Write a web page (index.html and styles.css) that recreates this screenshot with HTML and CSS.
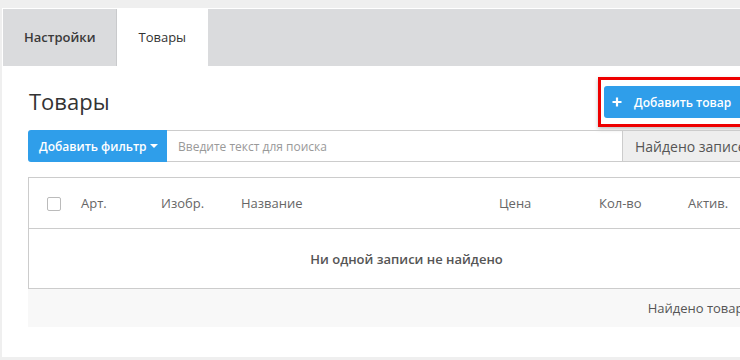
FILE: index.html
```html
<!DOCTYPE html>
<html lang="ru">
<head>
<meta charset="utf-8">
<title>Товары</title>
<link rel="stylesheet" href="styles.css">
</head>
<body>
<div class="panel">
  <div class="tabs">
    <div class="tab">Настройки</div>
    <div class="tab active">Товары</div>
  </div>
  <div class="content">
    <div class="head">
      <h1 class="title">Товары</h1>
      <div class="highlight">
        <button class="btn add-btn"><span class="plus"><svg width="10" height="10" viewBox="0 0 10 10"><path d="M5 0.5v9M0.5 5h9" stroke="#fff" stroke-width="2.2"/></svg></span>Добавить товар</button>
      </div>
    </div>
    <div class="search">
      <button class="btn filter-btn">Добавить фильтр <span class="caret"></span></button>
      <div class="input">Введите текст для поиска</div>
      <div class="addon">Найдено записей: 0</div>
    </div>
    <div class="table">
      <div class="thead">
        <div><span class="checkbox"></span></div>
        <div>Арт.</div>
        <div>Изобр.</div>
        <div>Название</div>
        <div>Цена</div>
        <div>Кол-во</div>
        <div>Актив.</div>
      </div>
      <div class="empty">Ни одной записи не найдено</div>
    </div>
    <div class="footer">Найдено товаров: 0</div>
  </div>
</div>
</body>
</html>
```
FILE: styles.css
```css
html, body {
  margin: 0;
  padding: 0;
}
body {
  background: #efefef;
  font-family: "Open Sans", "Liberation Sans", sans-serif;
  width: 740px;
  height: 360px;
  overflow: hidden;
}
.panel {
  margin: 8px 0 0 2px;
  width: 808px;
  height: 349px;
  background: #fff;
  padding: 1px 0 0 1px;
  box-sizing: border-box;
}
.tabs {
  display: flex;
  height: 57px;
  background: #dadbdd;
}
.tab {
  display: flex;
  align-items: center;
  padding: 0 21px;
  font-size: 13px;
  font-weight: 600;
  color: #3a3a3a;
  border-right: 1px solid #c9cacc;
  padding-bottom: 2px;
}
.tab.active {
  background: #fff;
  font-weight: 400;
  color: #333;
  border-right: none;
  padding: 0 22px 2px 21px;
}
.content {
  padding: 0 25px;
}
.head {
  display: flex;
  justify-content: space-between;
  align-items: center;
  margin-top: 11px;
  height: 50px;
}
.title {
  margin: 0 0 0 1px;
  font-size: 22px;
  font-weight: 400;
  color: #333;
  line-height: 1;
  padding-bottom: 2px;
}
.highlight {
  border: 3px solid #ee0000;
  padding: 6px 0 6px 3px;
  box-shadow: 0 2px 4px rgba(0,0,0,0.25);
  width: 187px;
  box-sizing: border-box;
  height: 50px;
}
.btn {
  border: none;
  background: #2f9eea;
  color: #fff;
  font-family: inherit;
  font-weight: 600;
  font-size: 12px;
  cursor: pointer;
  display: flex;
  align-items: center;
}
.add-btn {
  height: 32px;
  width: 100%;
  border-radius: 3px 0 0 3px;
  padding: 0 0 0 8px;
}
.plus {
  display: inline-flex;
  margin-right: 12px;
}
.search {
  display: flex;
  margin-top: 3px;
  height: 32px;
}
.filter-btn {
  height: 32px;
  width: 139px;
  border-radius: 3px 0 0 3px;
  padding: 0 0 0 11px;
  flex: none;
}
.caret {
  display: inline-block;
  width: 0;
  height: 0;
  margin-left: 3px;
  border-left: 4px solid transparent;
  border-right: 4px solid transparent;
  border-top: 4px solid #fff;
}
.input {
  flex: none;
  width: 456px;
  box-sizing: border-box;
  border: 1px solid #ccc;
  border-left: none;
  display: flex;
  align-items: center;
  padding-left: 11px;
  font-size: 12px;
  color: #999;
}
.addon {
  flex: 1;
  background: #eee;
  border: 1px solid #ccc;
  border-left: none;
  display: flex;
  align-items: center;
  padding-left: 12px;
  font-size: 14px;
  color: #555;
  white-space: nowrap;
}
.table {
  margin-top: 15px;
  border: 1px solid #ccc;
}
.thead {
  display: grid;
  grid-template-columns: 34px 80px 80px 258px 100px 89px 1fr;
  align-items: center;
  height: 50px;
  padding-left: 18px;
  border-bottom: 1px solid #ccc;
  font-size: 13px;
  color: #666;
}
.checkbox {
  display: block;
  width: 12px;
  height: 12px;
  border: 1px solid #bbb;
  border-radius: 2px;
  margin-top: 1px;
}
.empty {
  height: 59px;
  display: flex;
  align-items: center;
  justify-content: center;
  font-size: 13px;
  font-weight: 600;
  color: #555;
}
.footer {
  background: #f8f8f8;
  height: 38px;
  display: flex;
  align-items: center;
  justify-content: flex-end;
  padding-right: 12px;
  font-size: 13px;
  color: #555;
}
```
